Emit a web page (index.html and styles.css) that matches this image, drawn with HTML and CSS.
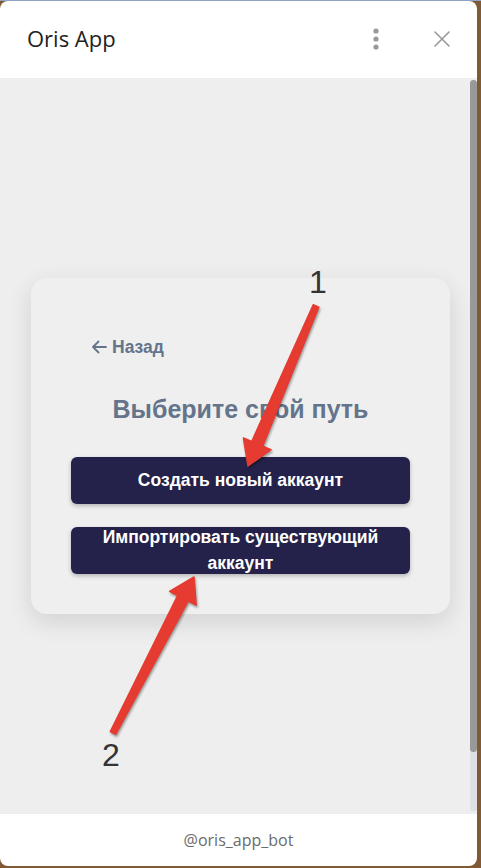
FILE: index.html
```html
<!DOCTYPE html>
<html>
  <head>
    <title>Oris App</title>
    <link rel="stylesheet" href="styles.css">
  </head>
  <body>
    <div class="window">
      <div class="header">
        <span class="title">Oris App</span>
        <div class="header-icons">
          <svg class="icon" width="16" height="24" viewBox="0 0 16 24">
            <circle cx="8" cy="4" r="2.6" fill="#999"/>
            <circle cx="8" cy="12" r="2.6" fill="#999"/>
            <circle cx="8" cy="20" r="2.6" fill="#999"/>
          </svg>
          <svg class="icon" width="18" height="18" viewBox="0 0 18 18">
            <path d="M2 2 L16 16 M16 2 L2 16" stroke="#999" stroke-width="1.6" stroke-linecap="round"/>
          </svg>
        </div>
      </div>
      <div class="body">
        <div class="content">
          <div class="card">
            <a class="back" href="#">
              <svg width="16" height="14" viewBox="0 0 16 14">
                <path d="M15 7 H2 M7.5 1.5 L2 7 L7.5 12.5" fill="none" stroke="#64748b" stroke-width="1.8" stroke-linecap="round" stroke-linejoin="round"/>
              </svg>
              Назад
            </a>
            <h2 class="choose">Выберите свой путь</h2>
            <button class="action">Создать новый аккаунт</button>
            <button class="action">Импортировать существующий аккаунт</button>
          </div>
        </div>
        <div class="scrollbar">
          <div class="thumb"></div>
        </div>
      </div>
      <div class="footer">@oris_app_bot</div>
    </div>

    <!-- annotation arrows -->
    <svg class="notes" width="481" height="868" viewBox="0 0 481 868">
      <text x="318" y="293" class="num" text-anchor="middle">1</text>
      <polygon class="arrow" points="318.8,307.2 262.7,446.1 271,449.6 248,466 243.4,438 251.7,441.5 313.2,304.8"/>
      <polygon class="arrow" points="115.7,734.4 188.2,601.1 196.2,605.2 194,577 169.6,591.4 177.6,595.5 110.3,731.6"/>
      <text x="111" y="766" class="num" text-anchor="middle">2</text>
    </svg>
  </body>
</html>
```
FILE: styles.css
```css
html, body {
  margin: 0;
  height: 100%;
}
body {
  background: #7f5a34;
  border-top: 1px solid #8fa3c8;
  box-sizing: border-box;
  font-family: "Open Sans", "Liberation Sans", sans-serif;
}
.window {
  margin: 0 4px 2px 0;
  height: calc(100% - 2px);
  background: #fff;
  border-radius: 8px;
  overflow: hidden;
  display: flex;
  flex-direction: column;
}
.header {
  height: 77px;
  display: flex;
  align-items: center;
  padding: 0 26px 0 27px;
  flex-shrink: 0;
}
.title {
  flex: 1;
  font-size: 22px;
  font-weight: 500;
  color: #222;
  margin-top: -3px;
}
.header-icons {
  display: flex;
  align-items: center;
  gap: 49px;
  margin-top: -1px;
}
.body {
  flex: 1;
  display: flex;
  background: #eeeeee;
}
.content {
  flex: 1;
  display: flex;
  align-items: center;
  padding: 0 20px 1px 31px;
}
.card {
  flex: 1;
  background: #efefef;
  border-radius: 16px;
  padding: 40px 40px 40px;
  box-shadow: 0 8px 24px rgba(0, 0, 0, 0.12);
  font-family: "Liberation Sans", Arial, sans-serif;
}
.back {
  display: flex;
  align-items: center;
  gap: 5px;
  margin: 19px 0 0 20px;
  color: #64748b;
  font-weight: bold;
  font-size: 17.5px;
  line-height: 20px;
  text-decoration: none;
}
.choose {
  margin: 37px 0 33px;
  text-align: center;
  color: #64748b;
  font-size: 25px;
  line-height: 30px;
}
.action {
  display: flex;
  align-items: center;
  justify-content: center;
  width: 100%;
  height: 47px;
  padding: 0 24px;
  border: none;
  border-radius: 6px;
  background: #24224a;
  color: #fff;
  font-family: "Liberation Sans", Arial, sans-serif;
  font-weight: bold;
  font-size: 17.5px;
  line-height: 26px;
  box-shadow: 0 2px 4px rgba(0, 0, 0, 0.25);
  cursor: pointer;
}
.action + .action {
  margin-top: 23px;
}
.scrollbar {
  width: 7px;
  margin: 2px 0 3px;
  background: #dde0e5;
  border-radius: 4px;
  display: flex;
  flex-direction: column;
}
.thumb {
  height: 672px;
  background: #999;
  border-radius: 4px;
}
.footer {
  height: 52px;
  flex-shrink: 0;
  display: flex;
  align-items: center;
  justify-content: center;
  font-size: 16px;
  color: #6b6b6b;
}
.notes {
  position: absolute;
  left: 0;
  top: 0;
  pointer-events: none;
}
.arrow {
  fill: #e53b30;
  stroke: #e53b30;
  stroke-width: 1.5;
  stroke-linejoin: round;
  filter: drop-shadow(1px 2px 1px rgba(0, 0, 0, 0.35));
}
.num {
  font-family: "Liberation Sans", Arial, sans-serif;
  font-size: 32px;
  fill: #333;
}
```
